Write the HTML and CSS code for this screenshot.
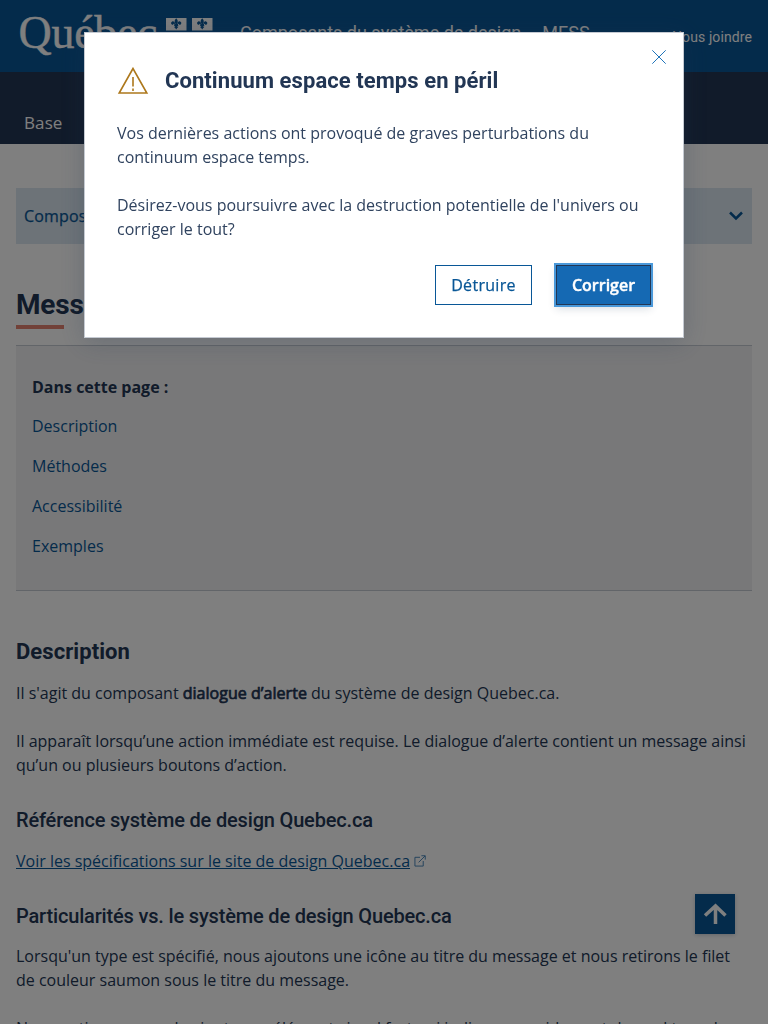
FILE: index.html
```html
<!DOCTYPE html>
<html lang="fr">
<head>
<meta charset="utf-8">
<title>Message d'alerte</title>
<link rel="stylesheet" href="styles.css">
</head>
<body>
<header class="piv">
  <svg class="piv-logo" width="200" height="56" viewBox="0 0 200 56">
    <text class="logo-text" x="0.500" y="38" textLength="139">Québec</text>
    <g id="flag">
      <rect class="flag-bg" x="148" y="8" width="20.5" height="12.5"/>
      <path class="fleur" d="M158.200 8.300c2 2 2 3.500.7 5.700h.5c.2-2.300 1.500-3 2.800-2.500 1.500.6 1.500 2.600.1 3.200-.9.300-1.500-.3-1.500-.9-.8.200-.9.900-.8 1.500h.3v1h-1.100c.1.900.6 1.300 1.200 1.500l-1.200.2-1 1.500-1-1.500-1.200-.2c.6-.2 1.100-.6 1.200-1.500h-1.100v-1h.3c.1-.6 0-1.300-.8-1.500 0 .6-.6 1.200-1.500.9-1.400-.6-1.400-2.600.1-3.200 1.300-.5 2.600.2 2.800 2.500h.5c-1.300-2.200-1.300-3.700.7-5.700z"/>
    </g>
    <use href="#flag" x="26"/>
  </svg>
  <div class="piv-title"><span>Composants du système de design</span><span>MESS</span></div>
  <a class="piv-link">Nous joindre</a>
</header>
<nav class="menu"><a>Base</a></nav>
<main class="page">
  <div class="section-menu"><span>Composants</span>
    <svg width="16" height="10" viewBox="0 0 16 10"><path d="M2 1.500l6 6 6-6"/></svg>
  </div>
  <h1>Message d'alerte</h1>
  <section class="toc">
    <strong>Dans cette page :</strong>
    <a>Description</a><a>Méthodes</a><a>Accessibilité</a><a>Exemples</a>
  </section>
  <h2>Description</h2>
  <p>Il s'agit du composant <b>dialogue d’alerte</b> du système de design Quebec.ca.</p>
  <p>Il apparaît lorsqu’une action immédiate est requise. Le dialogue d’alerte contient un message ainsi qu’un ou plusieurs boutons d’action.</p>
  <h3>Référence système de design Quebec.ca</h3>
  <p class="reference"><a>Voir les spécifications sur le site de design Quebec.ca</a><svg width="12" height="12" viewBox="0 0 13 13"><path d="M6.500 2.500H1v9.500h9V6.500M5 8l7-7M8 .8h4.200V5"/></svg></p>
  <h3>Particularités vs. le système de design Quebec.ca</h3>
  <p>Lorsqu'un type est spécifié, nous ajoutons une icône au titre du message et nous retirons le filet de couleur saumon sous le titre du message.</p>
  <p class="last">Nous optimons pour la ajouter un élément visuel fort qui indiquera rapidement de quel type de</p>
</main>
<div class="to-top"><svg width="24" height="22" viewBox="0 0 24 22"><path d="M12.500 21V3M2 12.500L12.500 3l10 9.500"/></svg></div>
<div class="backdrop">
  <div class="dialog" role="alertdialog">
    <svg class="close" width="14" height="14" viewBox="0 0 14 14"><path d="M.3.3l13.400 13.400M13.700.3L.3 13.700"/></svg>
    <div class="dialog-title">
      <svg width="32" height="28" viewBox="0 0 32 28"><path d="M16 1.500L2.200 26h27.600zM16 10v9.500M16 21.500v2.500"/></svg>
      <h4>Continuum espace temps en péril</h4>
    </div>
    <p>Vos dernières actions ont provoqué de graves perturbations du continuum espace temps.</p>
    <p>Désirez-vous poursuivre avec la destruction potentielle de l'univers ou corriger le tout?</p>
    <div class="actions"><button class="secondary">Détruire</button><button class="primary">Corriger</button></div>
  </div>
</div>
</body>
</html>
```
FILE: styles.css
```css
* { box-sizing: border-box; }
body { margin: 0; height: 1024px; overflow: hidden; background: #fff; color: #223654; font: 16px/24px "Open Sans", sans-serif; }
h1, h2, h3, h4, p { margin: 0; }
h1, h2, h3, h4 { font-family: Roboto, sans-serif; }
.piv { height: 72px; background: #095797; display: flex; align-items: center; color: #fff; padding: 0 16px; font-family: Roboto, sans-serif; }
.piv-logo { margin: 4px 22px 0 2px; flex: none; }
.logo-text { font: 46px "Liberation Serif", serif; fill: #fff; stroke: #fff; stroke-width: .4; }
.flag-bg { fill: #fff; }
.fleur { fill: #095797; }
.piv-title { display: flex; gap: 21px; font-size: 18px; line-height: 24px; flex: 1; white-space: nowrap; margin-top: -6px; }
.piv-link { font-size: 14px; line-height: 20px; margin-top: 1px; white-space: nowrap; letter-spacing: .1px; }
.menu { height: 72px; background: #223654; color: #fff; padding: 39px 24px 0; font-size: 17px; letter-spacing: .1px; }
.page { padding: 44px 16px 0; }
.section-menu { height: 56px; background: #dae6f0; color: #095797; display: flex; align-items: center; justify-content: space-between; padding: 0 8px; font-weight: 500; letter-spacing: .15px; -webkit-text-stroke: .25px currentColor; }
.section-menu svg { fill: none; stroke: #095797; stroke-width: 2.5; }
h1 { margin-top: 43px; font-size: 28px; line-height: 36px; font-weight: 700; letter-spacing: -.2px; }
h1::after { content: ""; display: block; width: 48px; height: 4px; margin-top: 2px; background: #e58271; }
.toc { margin-top: 16px; height: 246px; border: solid #c5cad2; border-width: 1px 0; background: #f1f1f2; padding: 29px 16px 0; display: flex; flex-direction: column; }
.toc strong { font-weight: 700; margin-bottom: 15px; }
.toc a { color: #095797; margin-bottom: 16px; }
h2 { font-size: 22px; line-height: 28px; font-weight: 700; margin: 47px 0 15px; letter-spacing: .07px; }
p + p { margin-top: 24px; }
b { font-weight: 400; letter-spacing: .03px; -webkit-text-stroke: .7px currentColor; }
h3 { font-size: 20px; line-height: 24px; font-weight: 500; margin: 31px 0 17px; letter-spacing: -.17px; }
.reference { display: flex; align-items: center; gap: 4px; color: #095797; }
.reference a { text-decoration: underline; }
.reference svg { fill: none; stroke: #3f7fb5; }
.reference + h3 { margin-bottom: 16px; }
.last { white-space: nowrap; }
.to-top { position: fixed; left: 695px; top: 894px; width: 40px; height: 40px; background: #095797; display: grid; place-items: center; box-shadow: 0 1px 4px rgba(34,54,84,.24); }
.to-top svg { fill: none; stroke: #fff; stroke-width: 3.5; }
.backdrop { position: fixed; inset: 0; background: rgba(0,0,0,.5); display: flex; justify-content: center; align-items: flex-start; padding-top: 32px; }
.dialog { position: relative; width: 600px; height: 306px; background: #fff; border: 1px solid #c5cad2; box-shadow: 0 4px 24px rgba(34,54,84,.24); padding: 32px; }
.dialog p { color: #30435f; }
.close { position: absolute; right: 17px; top: 17px; stroke: #1f74ba; fill: none; }
.dialog-title { display: flex; gap: 16px; align-items: center; height: 32px; margin-bottom: 24px; }
.dialog-title svg { fill: none; stroke: #ad781c; stroke-width: 1.6; }
h4 { font-size: 22px; line-height: 28px; font-weight: 700; letter-spacing: .07px; }
.actions { display: flex; justify-content: flex-end; gap: 24px; margin-top: 24px; }
button { font: 600 16px/24px "Open Sans", sans-serif; height: 40px; padding: 0; width: 97px; border: 1px solid #095797; background: #fff; color: #095797; }
.secondary { font-weight: 500; letter-spacing: .3px; -webkit-text-stroke: .25px currentColor; }
.primary { width: 95px; -webkit-text-stroke: .4px #fff; background: #1569b3; color: #fff; border-color: #223654; outline: 2px solid #4a98d9; box-shadow: 0 4px 8px rgba(34,54,84,.16); }
```
